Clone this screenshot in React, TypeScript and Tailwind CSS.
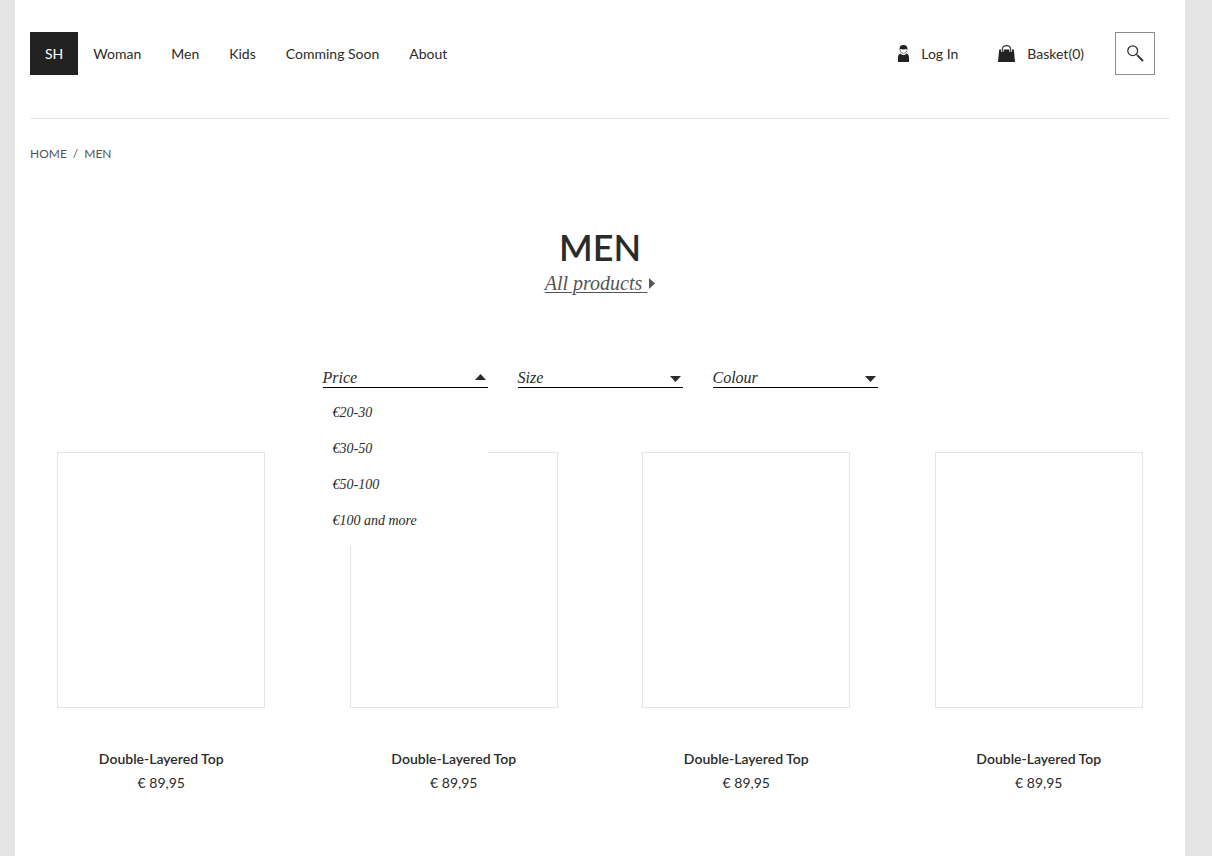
import { useState } from 'react';

const navItems = ['Woman', 'Men', 'Kids', 'Comming Soon', 'About'];

const filters = [
  { name: 'Price', options: ['€20-30', '€30-50', '€50-100', '€100 and more'] },
  { name: 'Size', options: ['S', 'M', 'L', 'XL'] },
  { name: 'Colour', options: ['Black', 'White', 'Blue', 'Grey'] },
];

const products = [1, 2, 3, 4].map((id) => ({ id, name: 'Double-Layered Top', price: '€ 89,95' }));

function UserIcon() {
  return (
    <svg width="11" height="17" viewBox="0 0 11 17" aria-hidden="true">
      <path d="M1.600 4.800V3.400C1.600 1.100 3.200 0 5.500 0s3.900 1.100 3.900 3.400v1.400L8.600 4C7 4.500 4 4.500 2.400 4z" fill="#222" />
      <path d="M2 4.200C2 6.800 3.400 8.300 5.500 8.300S9 6.800 9 4.200" fill="none" stroke="#777" strokeWidth=".9" />
      <path d="M2.600 8.400C3.600 9.800 4.600 10 5.500 10s1.900-.2 2.900-1.600C10.300 9.200 11 10.600 11 12.300V17H0v-4.700C0 10.600.7 9.200 2.600 8.400z" fill="#222" />
    </svg>
  );
}

function BagIcon() {
  return (
    <svg width="17" height="17" viewBox="0 0 17 17" aria-hidden="true">
      <path d="M1.200 4.500h14.600L17 17H0z" fill="#222" />
      <path d="M4.300 7V4.600C4.300 2 6 .6 8.500.6s4.200 1.400 4.200 4V7" fill="none" stroke="#fff" strokeWidth="2.600" />
      <path d="M4.300 7V4.600C4.300 2 6 .6 8.500.6s4.200 1.400 4.200 4V7" fill="none" stroke="#333" strokeWidth="1.100" />
    </svg>
  );
}

function SearchIcon() {
  return (
    <svg width="17" height="17" viewBox="0 0 17 17" aria-hidden="true">
      <circle cx="5.700" cy="5.700" r="4.900" fill="none" stroke="#333" strokeWidth="1.300" />
      <path d="M9.200 9.200l1.600 1.600" stroke="#333" strokeWidth="1.200" />
      <path d="M10.400 10.400l5.600 5.600" stroke="#333" strokeWidth="2" />
    </svg>
  );
}

function Triangle({ up }: { up: boolean }) {
  return (
    <svg width="11" height="6" viewBox="0 0 11 6" aria-hidden="true" className={up ? 'mb-0.5' : 'mt-0.5'}>
      <path d={up ? 'M0 6 5.500 0 11 6z' : 'M0 0h11L5.500 6z'} fill="#2b2b2b" />
    </svg>
  );
}

export default function App() {
  const [open, setOpen] = useState<string | null>('Price');

  return (
    <div className="min-h-screen bg-[#e4e4e4] pr-3 font-['Lato',sans-serif] text-sm text-[#2b2b2b]">
      <div className="mx-auto min-h-screen max-w-[1170px] bg-white px-[15px] pb-10">
        <header className="flex items-start justify-between border-b border-[#e4e4e4] pt-8 pr-[15px] pb-[43px]">
          <nav className="flex h-[43px] items-stretch">
            <a href="#home" className="flex items-center bg-[#222] px-[15px] text-white">SH</a>
            {navItems.map((item) => (
              <a key={item} href="#category" className="flex items-center px-[15px]">{item}</a>
            ))}
          </nav>
          <div className="flex h-[43px] items-center">
            <a href="#login" className="mr-10 flex items-center gap-3"><UserIcon />Log In</a>
            <a href="#basket" className="mr-[31px] flex items-center gap-3"><BagIcon />Basket(0)</a>
            <button type="button" aria-label="Search" className="flex h-[43px] w-10 items-center justify-center border border-[#8c8c8c]">
              <SearchIcon />
            </button>
          </div>
        </header>

        <nav aria-label="Breadcrumb" className="mt-[27px] flex gap-1.5 text-xs text-[#555]">
          <a href="#home">HOME</a>
          <span>/</span>
          <a href="#men">MEN</a>
        </nav>

        <main>
          <div className="mt-[63px] flex flex-col items-center">
            <h1 className="text-4xl leading-11 font-semibold text-[#2b2b2b]">MEN</h1>
            <a href="#all" className="flex items-center gap-0.5 font-[Georgia,'Liberation_Serif',serif] text-xl leading-7 text-[#555] italic">
              <span className="whitespace-pre underline decoration-1 underline-offset-2">{'All products '}</span>
              <svg width="6" height="11" viewBox="0 0 6 11" aria-hidden="true"><path d="M0 0 6 5.500 0 11z" fill="#555" /></svg>
            </a>
          </div>

          <div className="mt-[71px] flex justify-center gap-[30px] font-[Georgia,'Liberation_Serif',serif] italic">
            {filters.map(({ name, options }) => (
              <div key={name} className="relative w-[165px]">
                <button
                  type="button"
                  aria-expanded={open === name}
                  onClick={() => setOpen(open === name ? null : name)}
                  className="flex h-5 w-full items-center justify-between border-b border-black pr-0.5 text-base leading-5 italic"
                >
                  {name}
                  <Triangle up={open === name} />
                </button>
                {open === name && (
                  <ul className="absolute top-full left-0 w-full bg-white py-[7px]">
                    {options.map((option) => (
                      <li key={option}>
                        <button type="button" className="flex h-9 w-full items-center px-2.5 text-sm italic">{option}</button>
                      </li>
                    ))}
                  </ul>
                )}
              </div>
            ))}
          </div>

          <div className="-mx-[15px] mt-16 grid grid-cols-4">
            {products.map(({ id, name, price }) => (
              <article key={id} className="flex flex-col items-center leading-6">
                <div className="h-64 w-52 border border-[#e4e4e4]" />
                <h2 className="mt-[39px] font-semibold">{name}</h2>
                <p>{price}</p>
              </article>
            ))}
          </div>
        </main>
      </div>
    </div>
  );
}
